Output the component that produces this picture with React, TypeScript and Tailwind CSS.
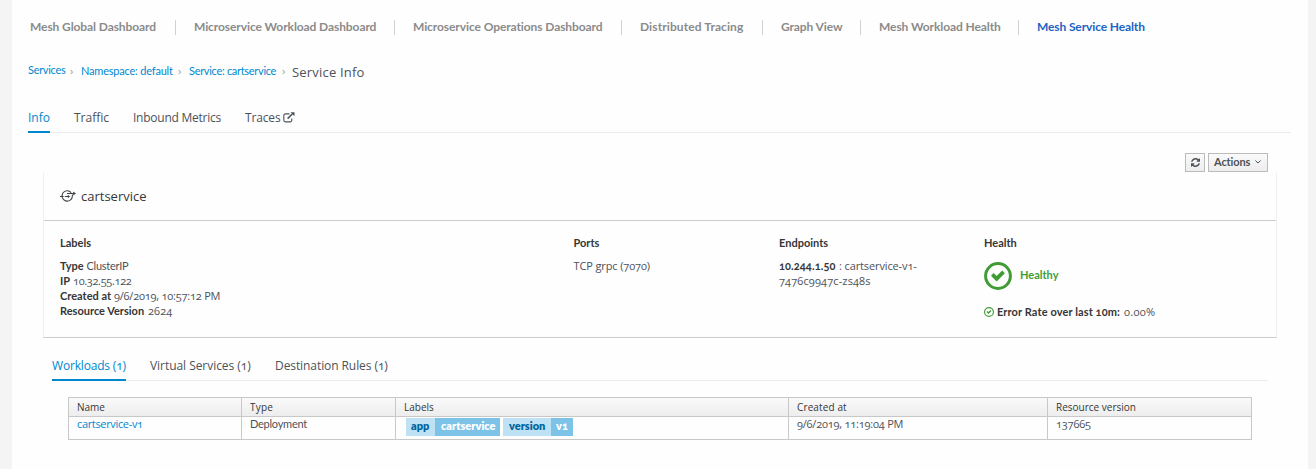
import type { ReactNode } from "react";

function T({ c = "", children }: { c?: string; children: ReactNode }) {
  return <span className={"whitespace-pre " + c}>{children}</span>;
}

function B({ c = "", children }: { c?: string; children: ReactNode }) {
  return (
    <span className={"inline-block whitespace-pre font-['Lato',sans-serif] text-[11px] font-bold " + c}>{children}</span>
  );
}

function CheckCircle({ size, thin }: { size: number; thin?: boolean }) {
  return (
    <svg width={size} height={size} viewBox="0 0 28 28" className="shrink-0 text-[#3f9c35]">
      <circle cx="14" cy="14" r="12.4" fill="none" stroke="currentColor" strokeWidth={thin ? 3.2 : 3} />
      <path d="M7 13.7l2.6-2.6 3 3 5.6-5.6 2.7 2.7-8.3 8.2z" fill="currentColor" />
    </svg>
  );
}

function ServiceIcon() {
  return (
    <svg width="17" height="13" viewBox="0 0 17 13" className="shrink-0" fill="none" stroke="#3f4449" strokeWidth="1.1">
      <path d="M11.2 2.600A5.200 5.200 0 1 0 12.400 6V4.500" />
      <path d="M0 6.500h3.6M4.8 6.500h4M7 3.5h6.600" />
      <path d="M7.8 4.8l2.2 1.7-2.2 1.700zM13.200 1.500l2.800 2-2.800 2z" fill="#3f4449" stroke="none" />
    </svg>
  );
}

function ExternalLink() {
  return (
    <svg width="12" height="11" viewBox="0 0 12 11" fill="none" stroke="#4d5258" strokeWidth="1.1">
      <path d="M6.5 1.9H2.4A1.6 1.6 0 0 0 .8 3.5v4.8a1.6 1.6 0 0 0 1.6 1.6h4.8a1.6 1.6 0 0 0 1.6-1.6V6.4" />
      <path d="M4.6 6.6L9.8 1.5" strokeWidth="1.5" />
      <path d="M7.5.2h4v4z" fill="#4d5258" stroke="none" />
    </svg>
  );
}

function Refresh() {
  return (
    <svg width="9" height="9" viewBox="0 0 1536 1536" fill="#4d5258">
      <path d="M1511 928q0 5-1 7-64 268-268 434.500T764 1536q-146 0-282.500-55T238 1324l-129 129q-19 19-45 19t-45-19-19-45V960q0-26 19-45t45-19h448q26 0 45 19t19 45-19 45l-137 137q71 66 161 102t187 36q134 0 250-65t186-179q11-17 53-117 8-23 30-23h192q13 0 22.500 9.500t9.500 22.500zm25-800v448q0 26-19 45t-45 19h-448q-26 0-45-19t-19-45 19-45l138-138Q969 256 768 256q-134 0-250 65T332 500q-11 17-53 117-8 23-30 23H50q-13 0-22.500-9.500T18 608v-7q65-268 270-434.500T768 0q146 0 284 55.500T1297 212l130-129q19-19 45-19t45 19 19 45z" />
    </svg>
  );
}

const nav = [
  { t: "Mesh Global Dashboard", c: "w-[164px]" },
  { t: "Microservice Workload Dashboard", c: "w-[219px]" },
  { t: "Microservice Operations Dashboard", c: "w-[227px]" },
  { t: "Distributed Tracing", c: "w-[141px] tracking-[0.1px]" },
  { t: "Graph View", c: "w-[98px]" },
  { t: "Mesh Workload Health", c: "w-[158px]" },
];

const headers = [
  { t: "Name", ls: "" },
  { t: "Type", ls: "tracking-[0.18px]" },
  { t: "Labels", ls: "" },
  { t: "Created at", ls: "tracking-[0.12px]" },
  { t: "Resource version", ls: "" },
];

export default function App() {
  return (
    <div className="h-[469px] w-[1316px] overflow-hidden bg-[#f4f4f4] pr-2 pl-3 font-['Open_Sans',sans-serif] text-[11px] leading-[15px] text-[#4d5258] oldstyle-nums">
      <div className="flex h-full flex-col bg-[#fefefe]">
        <nav className="mt-5 flex h-[15px] items-center pl-[18px] font-['Lato',sans-serif] text-[12px] leading-[14px] font-bold tracking-[-0.09px] text-[#8b8b8b]">
          {nav.map((n) => (
            <div key={n.t} className={"flex h-full shrink-0 items-start justify-between pr-[18px] " + n.c}>
              <T>{n.t}</T>
              <span className="h-full w-px bg-[#d1d1d1]" />
            </div>
          ))}
          <T c="self-start tracking-[-0.12px] text-[#1c63c4]">Mesh Service Health</T>
        </nav>

        <div className="mt-[27px] flex h-[19px] pl-4 text-[#0088ce]">
          <a className="w-[42px] font-['Lato',sans-serif] tracking-[-0.3px]"><T>Services</T></a>
          <span className="w-[11px] pt-px text-[#9c9c9c]">›</span>
          <a className="w-[97px] pt-px font-['Lato',sans-serif] tracking-[-0.2px]"><T>Namespace: default</T></a>
          <span className="w-[11px] pt-px text-[#9c9c9c]">›</span>
          <a className="w-[93px] pt-px font-['Lato',sans-serif] tracking-[-0.3px]"><T>Service: cartservice</T></a>
          <span className="w-[10px] pt-px text-[#9c9c9c]">›</span>
          <span className="pt-[3px] text-[13px] text-[#4d5258]"><T c="tracking-[0.2px]">Service Info</T></span>
        </div>

        <div className="mt-[28px] mr-[17px] ml-4 flex h-[24px] border-b border-[#ececec] text-[12px] leading-[17px]">
          <div className="mr-6 h-[24px] w-[22px] border-b-2 border-[#0088ce] text-[#0088ce]"><T>Info</T></div>
          <div className="w-[59px]"><T>Traffic</T></div>
          <div className="w-[112px]"><T c="tracking-[-0.25px]">Inbound Metrics</T></div>
          <div className="flex">
            <span className="w-[38px]"><T c="tracking-[-0.15px]">Traces</T></span>
            <span className="pt-[3px]"><ExternalLink /></span>
          </div>
        </div>

        <div className="mt-5 flex h-[19px] justify-end gap-[3px] pr-10">
          <button className="flex w-[20px] items-center justify-center border border-[#bbb] bg-linear-to-b from-[#fafafa] to-[#ededed] pb-px"><Refresh /></button>
          <button className="flex w-[60px] items-center border border-[#bbb] bg-linear-to-b from-[#fafafa] to-[#ededed] pb-[3px] pl-[5px]">
            <span className="w-[41px] text-left"><B c="tracking-[-0.1px]">Actions</B></span>
            <svg width="6" height="4" viewBox="0 0 6 4" fill="none" stroke="#4d5258" className="mt-px"><path d="M.4.500L3 3 5.600.500" /></svg>
          </button>
        </div>

        <section className="mx-[31px] flex h-[166px] flex-col border-x border-b border-x-[#f0f0f0] border-b-[#cccccc]">
          <div className="flex h-[49px] items-center border-b border-[#cccccc] pl-4 text-[13px] text-[#363636]">
            <span className="w-[21px]"><ServiceIcon /></span><T>cartservice</T>
          </div>
          <div className="flex pt-[14px] pl-4">
            <div className="w-[513.5px]">
              <div className="mb-[7px] h-[16px] text-[#363636]"><B>Labels</B></div>
              <div className="h-[15px]"><B c="w-[26.5px] text-[#363636]">Type</B><T c="font-['Lato',sans-serif] tracking-[-0.25px]">ClusterIP</T></div>
              <div className="h-[15px]"><B c="w-[13px] text-[#363636]">IP</B><T c="tracking-[-0.35px]">10.32.55.122</T></div>
              <div className="h-[15px]"><B c="w-[54px] text-[#363636]">Created at</B><T c="tracking-[-0.22px]">9/6/2019, 10:57:12 PM</T></div>
              <div className="h-[15px]"><B c="w-[88px] text-[#363636]">Resource Version</B><T c="tracking-[0.1px]">2624</T></div>
            </div>
            <div className="w-[205.5px]">
              <div className="mb-[7px] h-[16px] text-[#363636]"><B>Ports</B></div>
              <div className="h-[15px]"><T c="tracking-[-0.12px]">TCP grpc (7070)</T></div>
            </div>
            <div className="w-[205px]">
              <div className="mb-[7px] h-[16px] text-[#363636]"><B>Endpoints</B></div>
              <div className="h-[15px]"><B c="w-[60px] tracking-[0.1px] text-[#363636]">10.244.1.50</B><T c="tracking-[-0.12px]">: cartservice-v1-</T></div>
              <div className="h-[15px]"><T c="tracking-[0.12px]">7476c9947c-zs48s</T></div>
            </div>
            <div>
              <div className="mb-[11px] h-[16px] text-[#363636]"><B>Health</B></div>
              <div className="flex h-[28px] items-center gap-2 text-[#3f9c35]"><CheckCircle size={28} /><B c="pb-[3px]">Healthy</B></div>
              <div className="mt-[14px] flex h-[15px] items-center">
                <CheckCircle size={10} thin />
                <B c="ml-[3px] w-[127px] tracking-[0.11px] text-[#363636]">Error Rate over last 10m:</B>
                <T c="tracking-[0.3px]">0.00%</T>
              </div>
            </div>
          </div>
        </section>

        <div className="mt-[19px] mr-10 ml-10 flex h-[24px] border-b border-[#ececec] text-[12px] leading-[17px]">
          <div className="mr-6 h-[24px] w-[74px] border-b-2 border-[#0088ce] text-[#0088ce]"><T c="tracking-[-0.18px]">Workloads (1)</T></div>
          <div className="w-[125px]"><T c="tracking-[-0.05px]">Virtual Services (1)</T></div>
          <div><T c="tracking-[-0.08px]">Destination Rules (1)</T></div>
        </div>

        <div className="mt-4 ml-14 grid w-[1184px] grid-cols-[173px_154px_393px_259px_204px] border-t border-l border-[#c8c8c8]">
          {headers.map((h) => (
            <div key={h.t} className="h-[19px] border-r border-b border-[#c8c8c8] bg-linear-to-b from-[#fafafa] to-[#ededed] pl-2 text-[10px] leading-[18px] text-[#363636]">
              <T c={h.ls}>{h.t}</T>
            </div>
          ))}
          <div className="h-[23px] border-r border-b border-[#c8c8c8] pl-2 leading-[14px] text-[#0088ce]"><T c="tracking-[-0.34px]">cartservice-v1</T></div>
          <div className="border-r border-b border-[#c8c8c8] pl-2 font-['Lato',sans-serif] leading-[14px]"><T c="tracking-[-0.25px]">Deployment</T></div>
          <div className="flex border-r border-b border-[#c8c8c8] pt-px pl-[10px] leading-[16px]">
            <span className="h-[18px] w-[29px] bg-[#bee1f4] pl-[5px] text-[#00659c]"><B c="font-extrabold">app</B></span>
            <span className="mr-[3px] h-[18px] w-[65px] bg-[#7dc3e8] pl-[6px] text-white"><B c="font-extrabold">cartservice</B></span>
            <span className="h-[18px] w-[48px] bg-[#bee1f4] pl-[6px] text-[#00659c]"><B c="font-extrabold">version</B></span>
            <span className="h-[18px] w-[22px] bg-[#7dc3e8] pl-[5px] text-white"><B c="font-extrabold">v1</B></span>
          </div>
          <div className="border-r border-b border-[#c8c8c8] pl-2 leading-[14px]"><T c="tracking-[-0.22px]">9/6/2019, 11:19:04 PM</T></div>
          <div className="border-r border-b border-[#c8c8c8] pl-2 leading-[14px]"><T c="tracking-[-0.2px]">137665</T></div>
        </div>
      </div>
    </div>
  );
}
